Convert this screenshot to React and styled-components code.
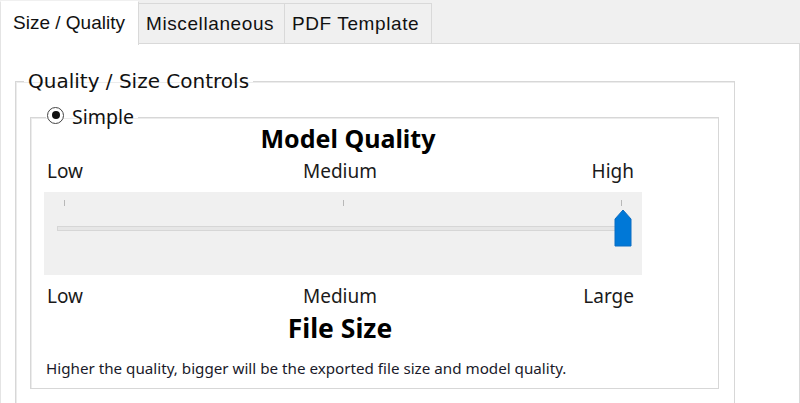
import React from "react";
import styled, { createGlobalStyle } from "styled-components";

const GlobalStyle = createGlobalStyle`
  html, body {
    margin: 0;
    padding: 0;
    background: #f0f0f0;
    overflow: hidden;
  }
`;

const App = () => {
  return (
    <Window>
      <GlobalStyle />
      <TabStrip>
        <Tab active width={139}>Size / Quality</Tab>
        <Tab width={147}>Miscellaneous</Tab>
        <Tab width={148}>PDF Template</Tab>
        <TabFill />
      </TabStrip>
      <Panel>
        <OuterGroup>
          <OuterLegend>Quality / Size Controls</OuterLegend>
          <InnerGroup>
            <InnerLegend>
              <Radio />
              Simple
            </InnerLegend>
            <Column>
              <Heading>Model Quality</Heading>
              <Labels>
                <span>Low</span>
                <span>Medium</span>
                <span>High</span>
              </Labels>
              <Slider>
                <Ticks>
                  <Tick />
                  <Tick />
                  <Tick />
                </Ticks>
                <Track />
                <Thumb viewBox="0 0 18 38">
                  <path d="M1 10 L9 1 L17 10 L17 37 L1 37 Z" fill="#0078d7" stroke="#0a6cc2" strokeWidth="1" />
                </Thumb>
              </Slider>
              <Labels bottom>
                <span>Low</span>
                <span>Medium</span>
                <span>Large</span>
              </Labels>
              <Heading small>File Size</Heading>
            </Column>
            <Note>Higher the quality, bigger will be the exported file size and model quality.</Note>
          </InnerGroup>
        </OuterGroup>
      </Panel>
    </Window>
  );
};
export default App;

const Window = styled.div`
  width: 800px;
  height: 403px;
  display: flex;
  flex-direction: column;
  overflow: hidden;
  font-family: "Noto Sans", sans-serif;
  color: #111;
`;

const TabStrip = styled.div`
  display: flex;
  align-items: flex-end;
  height: 44px;
  flex-shrink: 0;
`;

const Tab = styled.div`
  box-sizing: border-box;
  width: ${(p) => p.width}px;
  height: ${(p) => (p.active ? "44px" : "41px")};
  padding: ${(p) => (p.active ? "0 0 2px 12px" : "0 0 0 7px")};
  margin-bottom: ${(p) => (p.active ? "-1px" : "0")};
  display: flex;
  align-items: center;
  font-family: "Liberation Sans", Arial, sans-serif;
  font-size: 19px;
  letter-spacing: ${(p) => (p.active ? "0" : "0.6px")};
  white-space: nowrap;
  color: #111;
  background: ${(p) => (p.active ? "#fff" : "#f0f0f0")};
  border: 1px solid #d9d9d9;
  border-bottom: ${(p) => (p.active ? "none" : "1px solid #d9d9d9")};
  border-left-color: ${(p) => (p.active ? "#e4e4e4" : "#d9d9d9")};
  border-top-color: ${(p) => (p.active ? "transparent" : "#d9d9d9")};
  & + & {
    margin-left: -1px;
  }
  position: relative;
  z-index: ${(p) => (p.active ? 1 : 0)};
`;

const TabFill = styled.div`
  flex: 1;
  border-bottom: 1px solid #d9d9d9;
  align-self: stretch;
`;

const Panel = styled.div`
  flex: 1;
  background: #fff;
  border-left: 1px solid #e4e4e4;
  border-right: 1px solid #d9d9d9;
  padding: 24px 0 0 14px;
`;

const OuterGroup = styled.fieldset`
  box-sizing: border-box;
  width: 720px;
  margin: 0;
  padding: 0 15px 0 14px;
  border: 1px solid #d7d7d7;
  box-shadow: inset 1px 1px 0 #ececec;
  height: 400px;
`;

const OuterLegend = styled.legend`
  margin-left: -6px;
  padding: 0 4px;
  font-family: "DejaVu Sans", sans-serif;
  font-size: 20px;
  line-height: 26px;
  color: #111;
`;

const InnerGroup = styled.fieldset`
  box-sizing: border-box;
  margin: 12px 0 0 0;
  padding: 0 13px 10px 13px;
  border: 1px solid #d7d7d7;
  box-shadow: inset 1px 1px 0 #ececec;
  height: 283px;
`;

const InnerLegend = styled.legend`
  display: flex;
  align-items: center;
  gap: 8px;
  margin-left: 2px;
  padding: 0 4px 0 1px;
  font-size: 19.5px;
  line-height: 22px;
  color: #111;
`;

const Radio = styled.span`
  box-sizing: border-box;
  width: 17px;
  height: 17px;
  border-radius: 50%;
  border: 1.5px solid #444;
  background: #fff;
  display: flex;
  align-items: center;
  justify-content: center;
  margin-top: -4px;
  &::after {
    content: "";
    width: 8px;
    height: 8px;
    border-radius: 50%;
    background: #111;
  }
`;

const Column = styled.div`
  width: 598px;
  display: flex;
  flex-direction: column;
`;

const Heading = styled.div`
  text-align: center;
  font-weight: 700;
  font-size: ${(p) => (p.small ? "26.5px" : "25px")};
  line-height: 32px;
  margin: ${(p) => (p.small ? "4px 0 0 -6px" : "-6px 0 0 10px")};
  color: #000;
`;

const Labels = styled.div`
  display: grid;
  grid-template-columns: 1fr auto 1fr;
  padding: 0 8px 0 3px;
  margin-top: ${(p) => (p.bottom ? "9px" : "5px")};
  font-size: 19px;
  line-height: 24px;
  color: #1a1a1a;
  & > span:nth-child(2) {
    margin-right: 1px;
  }
  & > span:last-child {
    text-align: right;
  }
`;

const Slider = styled.div`
  position: relative;
  box-sizing: border-box;
  height: 83px;
  margin-top: 9px;
  background: #f0f0f0;
  padding: 8px 20px 0 20px;
`;

const Ticks = styled.div`
  display: flex;
  justify-content: space-between;
`;

const Tick = styled.div`
  width: 1px;
  height: 6px;
  background: #b8b8b8;
`;

const Track = styled.div`
  box-sizing: border-box;
  height: 5px;
  margin: 20px 2px 0 -7px;
  background: #e6e6e6;
  border: 1px solid #d6d6d6;
`;

const Thumb = styled.svg`
  position: absolute;
  left: 570px;
  top: 17px;
  width: 18px;
  height: 38px;
`;

const Note = styled.div`
  margin-top: 14px;
  padding-left: 2px;
  font-size: 15.2px;
  line-height: 20px;
  color: #1a1a2a;
`;
